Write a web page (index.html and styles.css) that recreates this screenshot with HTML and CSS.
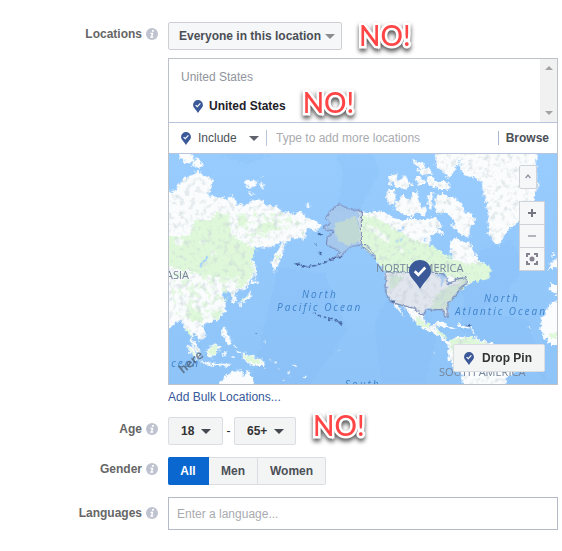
FILE: index.html
```html
<!DOCTYPE html>
<html lang="en">
<head>
<meta charset="utf-8">
<title>Audience</title>
<link rel="stylesheet" href="styles.css">
</head>
<body>
<svg class="defs" width="0" height="0" aria-hidden="true">
  <symbol id="info" viewBox="0 0 12 12"><circle cx="6" cy="6" r="6" fill="#bfc2cf"/><path d="M6.2 2h1.9l-.4 1.7H5.8zM4.4 4.7h3L6.5 8.6h1l-.3 1.2H4.1l.2-1.2h.6l.7-2.7h-1z" fill="#fff"/></symbol>
  <symbol id="pin" viewBox="0 0 22 29"><path d="M11 0a11 11 0 0 0-11 11c0 6 5 8 11 18 6-10 11-12 11-18A11 11 0 0 0 11 0z" fill="#3b5998"/><path d="M5.7 11.3l3.6 3.5 7-7.3" fill="none" stroke="#fff" stroke-width="2.6"/></symbol>
</svg>
<form class="form">
  <div class="row">
    <div class="label"><label for="scope">Locations</label><svg class="info"><use href="#info"/></svg></div>
    <div class="field">
      <div class="line">
        <span class="pick scope"><select id="scope"><option>Everyone in this location</option></select></span>
        <strong class="stamp">NO!</strong>
      </div>
      <div class="panel">
        <div class="list">
          <div class="items">
            <div class="group">United States</div>
            <div class="item"><svg class="pin"><use href="#pin"/></svg><b>United States</b><strong class="stamp">NO!</strong></div>
          </div>
          <div class="scroll"><i class="up"></i><i class="down"></i></div>
        </div>
        <div class="adder">
          <svg class="pin"><use href="#pin"/></svg>
          <span class="pick include"><select aria-label="Include or exclude"><option>Include</option></select></span>
          <input class="search" type="text" aria-label="Add locations" placeholder="Type to add more locations">
          <button type="button" class="browse">Browse</button>
        </div>
        <div class="map">
          <svg class="world" viewBox="0 0 388 230" preserveAspectRatio="xMidYMid slice">
            <defs>
              <linearGradient id="sea" x2="0" y2="1"><stop offset="0" stop-color="#98ccff"/><stop offset="1" stop-color="#8fc4f8"/></linearGradient>
              <filter id="coast" x="0" y="0" width="1" height="1" color-interpolation-filters="sRGB"><feTurbulence type="fractalNoise" baseFrequency=".09" numOctaves="3" seed="4"/><feDisplacementMap in="SourceGraphic" scale="20" xChannelSelector="R" yChannelSelector="G"/></filter>
              <filter id="border" x="-.1" y="-.1" width="1.2" height="1.2" color-interpolation-filters="sRGB"><feTurbulence type="fractalNoise" baseFrequency=".09" numOctaves="2" seed="4"/><feDisplacementMap in="SourceGraphic" scale="12" xChannelSelector="R" yChannelSelector="G"/></filter>
              <filter id="relief" x="0" y="0" width="1" height="1" color-interpolation-filters="sRGB"><feTurbulence type="fractalNoise" baseFrequency=".06" numOctaves="4" seed="9"/><feColorMatrix values="0 0 0 0 .78  0 0 0 0 .83  0 0 0 0 .85  3 0 0 0 -1.5"/><feComposite in2="SourceGraphic" operator="in"/></filter>
              <filter id="woods" x="0" y="0" width="1" height="1" color-interpolation-filters="sRGB"><feTurbulence type="fractalNoise" baseFrequency=".05" numOctaves="4" seed="21"/><feColorMatrix values="0 0 0 0 .86  0 0 0 0 .97  0 0 0 0 .84  10 0 0 0 -5"/><feComposite in2="SourceGraphic" operator="in"/></filter>
              <g id="asia"><path d="M-20 130L20 122 30 105 45 88 70 75 90 62 103 70 108 80 133 82 133 105 120 135 150 138 180 148 190 135 200 145 205 165 240 165 250 150 285 152 295 165 330 170 335 185 370 190 400 185 420 205 440 212 460 228 450 245 420 235 412 265 380 262 350 280 345 305 335 335 320 368 312 340 318 315 335 290 345 275 325 280 305 295 275 290 245 300 230 325 255 330 262 345 256 375 242 405 225 418 200 426 205 455 193 455 188 428 175 422 160 433 172 450 172 480 160 500 140 513 115 520 102 527 112 545 110 562 93 570 85 556 72 550 78 575 95 600 98 612 80 597 68 572 66 546 50 538 45 516 30 511 10 530-20 533z"/></g>
              <g id="america"><path d="M-2 185L30 190 60 180 75 190 95 200 125 212 150 205 190 210 220 200 236 213 245 230 215 255 208 285 215 305 240 315 262 325 270 345 277 325 270 290 275 268 290 265 310 275 330 275 340 300 352 325 372 345 350 360 378 352 388 368 350 390 340 397 320 405 300 412 290 430 275 445 262 465 264 496 255 497 246 475 200 475 190 490 195 512 210 528 224 524 236 512 226 535 246 550 252 566 268 576 288 564 310 558 345 567 400 580 450 620 470 655 440 685 438 720 312 720 306 676 285 660 262 620 268 590 250 572 230 555 195 540 160 510 145 490 128 468 110 458 135 500 126 494 98 457 82 435 78 400 74 365 45 325 15 292 -2 282z"/></g>
              <g id="isles"><path d="M35 2h35l7 35-16 4-25-17zM85 22l20 23-12 8-19-4zM233 90l30 2 5 12-17 10-20-6zM275 98l17 8-12 10zM283 78l4 3-3 3zM245 125l12 10-13 2zM413 163l12-2v8l-12 2zM258 352l10 18-8 20zM255 390l15 6-14 11-6-6zM250 418l-1 24-17 12-22 6 20-14 12-15zM213 460l10 3-8 10zM165 528l11 8 2 17 12 20-8 10-10-8-10-23zM125 590l25-10 8 10-15 28-18 4-12-15zM53 580l24 15 20 25-5 8-25-17zM95 632l35 8 60 2-3 5-50 2-42-11zM163 605l12 2-8 15zM220 610l35 8 33 18 5 17-20-7-20 3-25-22zM138 715l40-40 25-15 20 2 3 17 15-20 8 20 25 40zM305 628l10 6-12-2z"/></g>
              <g id="arctic"><path d="M160 25l10 10 25 10-3 12-25-7zM225 8l80-6-8 35-16 28-15 23-14-20-25-20zM85 80l27-14-3 30-24 7zM105 95l20-8 10-12 8 17 14 10-24 13-25 2zM170 60l35-6 14 17-30 3zM162 82l20-2 14 22-19 2zM198 80l18-3 10 20 42-2 2 23-44-2-26-22zM85 120l20 0 3 35-16 11-16-25zM105 160l25-24 18 16 8-22 18-8-1 24 10 20 14 10-3 25-22-14-15 15-24-8-28-15zM205 130l17-4-5 22-3 35-12-23zM228 135l20-4 10 8 26 2 20 20 10 28 15-4 18 25-17 22-1 26-13 4-28-24-16-8 11-12-13-25-20-7-12 8-14-26zM235 238l20 8-12 10-10-8zM300 0h232l-7 70 12 35-17 45-30 30-10 35-35 20-15 25-12 28-18-13-15-25-2-60-4-30-10-30-4-35-25-13-30-7-10-20z"/></g>
              <g id="usa"><path d="M78 365l85 2 70 3 17 2 12 14 0 14 8-1 20-12 28-5 1 18-17 12-10 20-20 16-10 20 2 34-8 1-9-25-48 3-9 15-13-6-14-16-35-7-33-10-14-18-6-30z"/></g>
              <path id="alaska" d="M580 182L545 177 515 164 490 178 472 205 487 220 465 230 478 242 492 240 494 252 478 262 475 285 506 298 515 306 505 318 482 330 515 322 550 290 580 284z"/>
            </defs>
            <rect width="388" height="230" fill="url(#sea)"/>
            <g transform="scale(.333333) translate(-3 -12)">
              <path d="M150 12l90 30 80-30zM500 12l25 60-20 110h70l60-120-20-50zM330 350l140 20 70 170-110 162H250l40-180zM690 380l120 170-40 150H640l-20-180zM940 300l90-30 40 70-50 90-120 80-20-90zM880 470l200 40 60 190-60-60-200-100z" fill="#70aeed" opacity=".12" filter="url(#coast)"/>
              <g filter="url(#coast)" fill="#fafcfd">
                <use href="#asia"/><use href="#isles"/><use href="#america" x="576"/><use href="#arctic" x="576"/>
                <path d="M1188 455l-42 3-10 24-16 25-3 27 10 27 18 20 43 5zM1188 402h-40l-3 22 43 14zM1188 320l-40 14-6 24 46-6zM1155 305l7 8-10 10zM804 515l24 4 36 18-20-1-40-14zM870 520l34 10-6 6-26-8z"/>
                <g fill="#dff8da"><path d="M-20 262l85-5 15-50 20 2 25 3 22-26 36 7 5 50 22 27 30 15 25 15-15 35-8 25-22 18-60 5-30-5-60-12L-20 345z"/><path d="M215 195l20 0-5 35-25 5zM260 180l10 25-12-8zM275 220l50-8-5 28-40 8zM205 345l50-10 3 30-30 45-22 5 4-45zM400 250l10 0-5 12zM318 318l18-6-6 20zM60 480l25-5 20 30-5 12-30-5-18-18zM140 490l25-14-14 28-18 5zM128 592l24-10-5 25-12 12-16-10zM222 615l35 6 26 18-35 0zM246 422l-12 26-16 6 20-20zM50 535l18 5 0 20zM60 590l30 28-20-10z"/>
                  <path d="M578 195l50 10 50 30 60 35 60 20 45 32 62 23 15-8 45 10-3 40-50 10-20 0-80-26-60-8-40 10-60-5-30-45-44-37z"/><path d="M876 400l20-9 5 8-40 35-24 25-2 20-45-5 20-45 30-20zM666 375l40 5-22 30-20 10zM750 500l20 20 18 2-8 12-35-12zM800 535l30 20 8 15-20-10zM845 570l60-8 110 40-30 40-100-8-30-20zM1140 555l28-8v22zM932 385l30-30 8 8-20 26z"/></g>
              </g>
              <g filter="url(#woods)" opacity=".7"><path d="M3 370l220-5-40 70-25 60-60 20-75-20zM200 190h150l50 30-70 40-80 20z"/><path d="M590 200l120 70 150 50 50 40-160 0-90-20z"/><path d="M735 490l40 35 40 5-10 10-50-20z"/></g>
              <g fill="#fafcfd" filter="url(#coast)"><path d="M15 275l20 15 12-15-12-14zM90 270l25 4-10 8zM590 225l20 0 30 20 25 30-15 0-28-24zM690 290l20 10-10 8zM130 300l20 8-20 10z" opacity=".8"/></g>
              <g filter="url(#relief)" opacity=".6"><use href="#asia"/><use href="#america" x="576"/><use href="#arctic" x="576"/></g>
              <g filter="url(#coast)" fill="#98ccff"><path d="M92 348l24-28 5 4-22 28zM690 240l22-10-16 16zM683 272l34-12-28 17zM763 270l14-4-6 9zM720 300l12 8-4 3zM800 375l30-5 9 16-14 0zM818 388l8-2v22l-6 2zM838 386l12 15-9 4z"/></g>
              <g filter="url(#border)">
                <path d="M500 220l65-22 14 72-35 15-30-10-12-20z" fill="#c8eac8" opacity=".8"/>
                <use href="#alaska" fill="#c3c7d8" fill-opacity=".4" stroke="#7684b4" stroke-width="3"/>
                <use href="#usa" x="576" fill="#b4bdd0" fill-opacity=".36" stroke="#7e8fb8" stroke-width="4"/>
                <path d="M580 284l16 0 20 26 10 18-10-5-16-22-20-12" fill="none" stroke="#7684b4" stroke-width="3"/>
                <path d="M382 341l16 4 18 5 32-4 35-14 35-14" fill="none" stroke="#45629f" stroke-width="5" stroke-dasharray="13 4"/>
                <path d="M450 250l14 7M453 306l8 6M443 280l4 3M436 489l8 4M452 496l6 2M468 500l6 3M482 506l9 3M500 509l10 5M514 514l9 10M263 549l3 1M890 526l18 2M671 454l9 1" fill="none" stroke="#4466a3" stroke-width="5"/>
                <path d="M320 635l5 5M332 655l2 3M362 662l3 14M376 645l10 5M408 684l7-3M290 575l2 2M511 601l3 1M797 608l2 1M1080 533l5 2M910 530l8 22M922 557l6 18M345 690l3 2M200 585l4 8M205 605l14 3M190 620l10 2" stroke="#fff" stroke-width="4"/>
              </g>
            </g>
            <g class="land-label"><text x="-3" y="125">ASIA</text><text x="207" y="118">NORTH AMERICA</text><text x="270" y="222">SOUTH AMERICA</text></g>
            <g class="sea-label"><text x="133" y="144">North</text><text x="108" y="157">Pacific Ocean</text><text x="315" y="148">North</text><text x="286" y="161">Atlantic Ocean</text><text x="176" y="234">South</text><text x="-7" y="213">Ocean</text></g>
            <text class="here" transform="translate(14 220) rotate(-40)">here</text>
            <use href="#pin" x="240" y="106" width="22" height="29"/>
          </svg>
          <div class="controls">
            <button type="button" class="tilt" aria-label="Collapse"><svg viewBox="0 0 17 22"><path d="M6 12l2.500-3 2.500 3" fill="none" stroke="#9694a2" stroke-width="1.500"/></svg></button>
            <div class="zoom">
              <button type="button" aria-label="Zoom in"><svg viewBox="0 0 24 22"><path d="M8 11h8M12 7v8" stroke="#777481" stroke-width="2"/></svg></button>
              <button type="button" aria-label="Zoom out"><svg viewBox="0 0 24 22"><path d="M8 11h8" stroke="#b2b4bd" stroke-width="2"/></svg></button>
              <button type="button" aria-label="Fit"><svg viewBox="0 0 24 22"><path d="M7 9V6h3M14 6h3v3M17 13v3h-3M10 16H7v-3" fill="none" stroke="#88818f" stroke-width="2"/><circle cx="12" cy="11" r="2.500" fill="#88818f"/></svg></button>
            </div>
          </div>
          <button type="button" class="drop"><svg class="pin"><use href="#pin"/></svg>Drop Pin</button>
        </div>
      </div>
      <a class="bulk" href="#">Add Bulk Locations...</a>
    </div>
  </div>
  <div class="row">
    <div class="label"><label for="from">Age</label><svg class="info"><use href="#info"/></svg></div>
    <div class="field line ages">
      <span class="pick age"><select id="from"><option>18</option></select></span>
      <span class="dash">-</span>
      <span class="pick age to"><select aria-label="Maximum age"><option>65+</option></select></span>
      <strong class="stamp">NO!</strong>
    </div>
  </div>
  <div class="row">
    <div class="label"><span id="gender">Gender</span><svg class="info"><use href="#info"/></svg></div>
    <div class="field line genders" role="group" aria-labelledby="gender">
      <button type="button" class="on" aria-pressed="true">All</button><button type="button">Men</button><button type="button">Women</button>
    </div>
  </div>
  <div class="row languages">
    <div class="label"><label for="lang">Languages</label><svg class="info"><use href="#info"/></svg></div>
    <div class="field"><input id="lang" type="text" placeholder="Enter a language..."></div>
  </div>
</form>
</body>
</html>
```
FILE: styles.css
```css
* { box-sizing: border-box; }
body { margin: 0; background: #fff; color: #1d2129; font: 12px/16px "Liberation Sans", Arial, sans-serif; }
button, input, select { font: inherit; color: inherit; margin: 0; }
.defs { position: absolute; }
.form { display: flex; flex-direction: column; gap: 12px; padding: 22px 4px 20px 0; }
.row { display: grid; grid-template-columns: 158px minmax(0, 1fr); column-gap: 10px; }
.label { display: flex; justify-content: flex-end; align-items: center; gap: 4px; height: 24px; font-weight: bold; color: #666; }
.info { width: 12px; height: 12px; }
.line { display: flex; align-items: center; height: 28px; }

.pick { position: relative; display: inline-flex; }
.pick select { appearance: none; height: 28px; border: 1px solid #ced0d4; border-radius: 2px; background: #f6f7f9; outline: 0; }
.pick::after { content: ""; position: absolute; right: 7px; top: 12px; border: 5px solid transparent; border-top-color: #8d8d8d; border-bottom: 0; pointer-events: none; }
.scope select { width: 174px; padding: 0 0 0 10px; font-weight: bold; color: #4b4f56; }
.age select { width: 55px; padding: 0 0 0 12px; background: #f3f4f4; border-color: #dadde1; font-weight: bold; color: #333; }
.age.to select { width: 62px; }
.age::after { right: 12px; border-top-color: #444950; }
.dash { width: 11px; text-align: center; }

.stamp { margin: -3px 0 0 17px; font: 500 28px/28px Lato, sans-serif; color: #ff4545; -webkit-text-stroke: 5px #fff; paint-order: stroke fill; stroke-linejoin: round; filter: drop-shadow(0 3px 2px rgba(0, 0, 0, .65)); }
.ages .stamp { margin-top: -12px; }

.panel { margin-top: 8px; border: 1px solid #bdc1c9; }
.list { display: flex; height: 63px; }
.items { flex: 1; padding: 10px 12px 0; }
.group { color: #90949c; }
.item { display: flex; align-items: center; height: 28px; margin-top: 7px; padding-left: 12px; }
.pin { width: 10px; height: 13px; flex: none; }
.item b { margin-left: 6px; }
.item .stamp { margin-top: -8px; }
.scroll { display: flex; flex-direction: column; justify-content: space-between; align-items: center; width: 17px; padding: 7px 0; background: #f1f1f1; }
.scroll i { border: 0 solid transparent; border-width: 0 4px; }
.scroll .up { border-bottom: 4px solid #a3a3a3; }
.scroll .down { border-top: 4px solid #a3a3a3; }

.adder { display: flex; align-items: center; height: 32px; padding: 0 8px 0 12px; border: solid #b8c5dc; border-width: 1px 0; color: #4b4f56; }
.include select { width: 75px; height: 16px; padding: 0 0 0 7px; border: 0; background: none; }
.include::after { top: 6px; border-top-color: #5f626c; }
.search { flex: 1; min-width: 0; height: 16px; padding: 0 0 0 9px; border: 0; border-left: 1px solid #b8c5dc; outline: 0; }
input::placeholder { color: #a9abb0; opacity: 1; }
.browse { height: 14px; line-height: 14px; padding: 0 0 0 7px; border: 0; border-left: 1px solid #a9b9d3; background: none; font-weight: bold; }

.map { position: relative; height: 230px; overflow: hidden; }
.world { display: block; width: 100%; height: 100%; }
.land-label { font: 11px "Open Sans", sans-serif; fill: #76859a; }
.sea-label { font: italic 10px "Open Sans", sans-serif; letter-spacing: 2px; fill: #3f83cb; }
.here { font: bold 12px "Open Sans", sans-serif; fill: #4d5969; opacity: .7; }
.controls { position: absolute; right: 12px; top: 11px; }
.controls button { display: block; width: 26px; height: 23px; padding: 0; border: 1px solid #cfd2d8; background: #f6f7f9; }
.controls svg { display: block; width: 100%; height: 100%; }
.controls .tilt { width: 18px; height: 24px; border-radius: 2px; }
.zoom { margin-top: 12px; }
.zoom button + button { border-top: 0; }
.zoom button:first-child { height: 24px; }
.drop { position: absolute; right: 12px; bottom: 12px; display: flex; align-items: center; gap: 8px; height: 28px; padding: 0 12px 0 10px; border: 1px solid #dadde1; border-radius: 2px; background: #f3f4f4; font-weight: bold; color: #333; }
.bulk { display: block; margin-top: 4px; color: #365899; text-decoration: none; }

.genders button { height: 28px; padding: 0 12px; border: 1px solid #dadde1; border-left: 0; background: #f3f4f4; font-weight: bold; color: #4b4f56; }
.genders button:last-child { border-radius: 0 2px 2px 0; }
.genders .on { width: 41px; border-color: #0a67d0; background: #0a67d0; color: #fff; border-radius: 2px 0 0 2px; }
.languages .label { height: 32px; }
.languages input { display: block; width: 100%; height: 33px; padding: 0 8px; border: 1px solid #b4bbc7; outline: 0; }
```
